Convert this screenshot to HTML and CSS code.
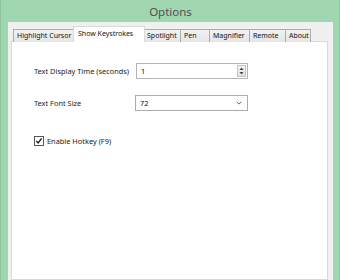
FILE: index.html
```html
<!DOCTYPE html>
<html lang="en">
<head>
    <meta charset="UTF-8">
    <title>Options</title>
    <link rel="stylesheet" href="styles.css">
</head>
<body>
    <div class="window">
        <div class="titlebar">Options</div>
        <div class="client">
            <div class="tabs">
                <div class="tab tab-highlight">Highlight Cursor</div>
                <div class="tab tab-keys active">Show Keystrokes</div>
                <div class="tab tab-spot">Spotlight</div>
                <div class="tab tab-pen">Pen</div>
                <div class="tab tab-mag">Magnifier</div>
                <div class="tab tab-remote">Remote</div>
                <div class="tab tab-about">About</div>
            </div>
            <div class="panel">
                <div class="form">
                    <label class="label">Text Display Time (seconds)</label>
                    <div class="field spin">
                        <span class="value">1</span>
                        <span class="spin-btn">
                            <svg width="5" height="3" viewBox="0 0 5 3"><path d="M0.5 3 L2.5 0.5 L4.5 3 Z" fill="#444"/></svg>
                            <svg width="5" height="3" viewBox="0 0 5 3"><path d="M0.5 0 L2.5 2.5 L4.5 0 Z" fill="#444"/></svg>
                        </span>
                    </div>
                    <label class="label">Text Font Size</label>
                    <div class="field select">
                        <span class="value">72</span>
                        <svg class="chevron" width="6" height="4" viewBox="0 0 6 4"><path d="M0.6 0.7 L3 3.1 L5.4 0.7" fill="none" stroke="#666" stroke-width="1"/></svg>
                    </div>
                </div>
                <div class="check-row">
                    <span class="checkbox">
                        <svg width="8" height="8" viewBox="0 0 8 8"><path d="M1.4 4 L3.2 6 L6.6 1.4" fill="none" stroke="#222" stroke-width="1.4"/></svg>
                    </span>
                    <span class="check-label">Enable Hotkey (F9)</span>
                </div>
            </div>
        </div>
    </div>
</body>
</html>
```
FILE: styles.css
```css
body {
    margin: 0;
    font-family: 'Noto Sans', Arial, sans-serif;
    background: #9fd5ae;
}

.window {
    height: 280px;
    display: flex;
    flex-direction: column;
    background: #a0d6b0;
    padding: 0 7px 0 8px;
    box-shadow: inset 1px 0 0 #8cc69c, inset -1px 0 0 #8cc69c;
    overflow: hidden;
}

.titlebar {
    height: 22px;
    line-height: 24px;
    text-align: center;
    font-size: 11.5px;
    color: #505050;
    flex-shrink: 0;
}

.client {
    flex: 1;
    display: flex;
    flex-direction: column;
    background: #f0f0f0;
    padding: 5px 5px 0 3px;
}

.tabs {
    display: flex;
    align-items: flex-end;
    height: 15px;
    padding-left: 2px;
    position: relative;
    z-index: 1;
    margin-bottom: -1px;
}

.tab {
    height: 13px;
    box-sizing: border-box;
    border: 1px solid #acacac;
    border-bottom: none;
    margin-left: -1px;
    background: linear-gradient(#f2f2f2, #e5e5e5);
    font-size: 7px;
    line-height: 12px;
    padding-left: 3px;
    color: #111;
    white-space: nowrap;
    overflow: hidden;
}

.tab-highlight { width: 61px; margin-left: 0; }
.tab-keys { width: 72px; }
.tab-spot { width: 38px; }
.tab-pen { width: 30px; }
.tab-mag { width: 41px; }
.tab-remote { width: 37px; }
.tab-about { width: 26px; }

.tab.active {
    height: 16px;
    background: #fff;
    border-color: #d9d9d9;
    line-height: 13px;
    padding-left: 4px;
    margin-right: -1px;
    position: relative;
    z-index: 2;
}

.panel {
    flex: 1;
    background: #fff;
    border: 1px solid #d9d9d9;
    padding: 21px 0 0 22px;
}

.form {
    display: grid;
    grid-template-columns: 102px 112px;
    grid-auto-rows: 16px;
    row-gap: 16px;
    align-items: center;
}

.label {
    font-size: 7.4px;
    color: #222;
}

.field {
    height: 16px;
    box-sizing: border-box;
    border: 1px solid #acacac;
    display: flex;
    align-items: center;
    font-size: 7.4px;
    color: #111;
    padding-left: 4px;
}

.field .value {
    flex: 1;
}

.spin {
    border-color: #b5b5b5;
}

.spin-btn {
    width: 9px;
    height: 12px;
    margin-right: 1px;
    background: linear-gradient(#f3f3f3, #e2e2e2);
    border: 1px solid #c4c4c4;
    box-sizing: border-box;
    display: flex;
    flex-direction: column;
    align-items: center;
    justify-content: space-evenly;
}

.spin-btn svg {
    display: block;
}

.select {
    margin-left: -1px;
}

.chevron {
    margin-right: 5px;
}

.check-row {
    display: flex;
    align-items: center;
    margin-top: 25px;
    gap: 3px;
}

.checkbox {
    width: 8px;
    height: 8px;
    border: 1px solid #555;
    background: #fff;
    display: flex;
}

.check-label {
    font-size: 7.4px;
    color: #222;
}
```
